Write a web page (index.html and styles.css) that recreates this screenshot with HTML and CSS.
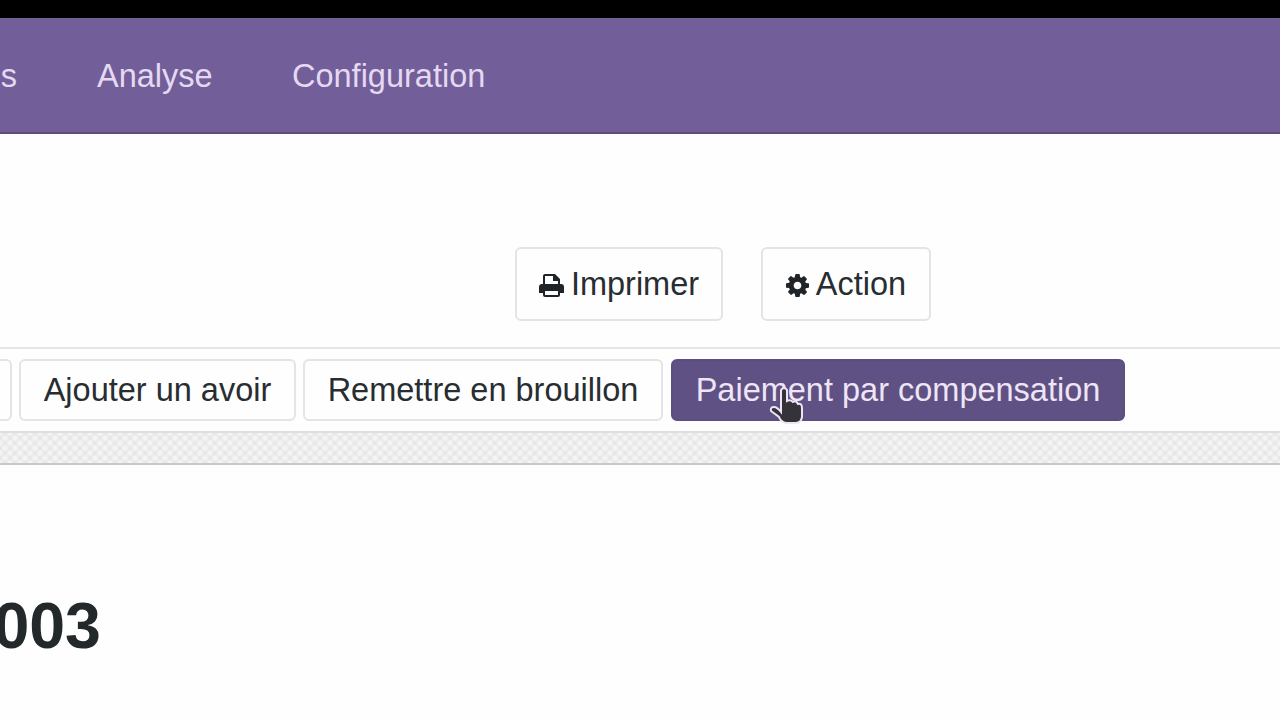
FILE: index.html
```html
<!DOCTYPE html>
<html lang="fr">
<head>
    <meta charset="utf-8">
    <title>Factures</title>
    <link rel="stylesheet" href="styles.css">
</head>

<body>

    <nav class="navbar">
        <a class="cut"><span>es</span></a>
        <a class="analyse"><span>Analyse</span></a>
        <a class="config"><span>Configuration</span></a>
    </nav>

    <div class="control-panel">
        <button class="btn print">
            <svg class="icon" viewBox="0 0 25 23" width="25" height="23">
                <path fill="currentColor" fill-rule="evenodd" d="M4 10V2Q4 0 6 0H16L21 5V10H22Q25 10 25 13V19H21V21Q21 23 19 23H6Q4 23 4 21V19H0V13Q0 10 3 10ZM6 2V10H19V7H14V2ZM6 17V21H19V17Z"/>
            </svg>
            <span>Imprimer</span>
        </button>
        <button class="btn action">
            <svg class="icon" viewBox="0 0 1536 1536" width="23" height="23">
                <path fill="currentColor" fill-rule="evenodd" d="M1024 768q0-106-75-181t-181-75-181 75-75 181 75 181 181 75 181-75 75-181zm512-109v222q0 12-8 23t-20 13l-185 28q-19 54-39 91 35 50 107 138 10 12 10 25t-9 23q-27 37-99 108t-94 71q-12 0-26-9l-138-108q-44 23-91 38-16 136-29 186-7 28-36 28H657q-14 0-24.500-8.500T621 1506l-28-184q-49-16-90-37l-141 107q-10 9-25 9-14 0-25-11-126-114-165-168-7-10-7-23 0-12 8-23 15-21 51-66.500t54-70.500q-27-50-41-99L29 913q-13-2-21-12.500T0 877V655q0-12 8-23t19-13l186-28q14-46 39-92-40-57-107-138-10-12-10-24 0-10 9-23 26-36 98.500-107.500T337 135q13 0 26 10l138 107q44-23 91-38 16-136 29-186 7-28 36-28h222q14 0 24.500 8.500T915 30l28 184q49 16 90 37l142-107q9-9 24-9 13 0 25 10 129 119 165 170 7 8 7 22 0 12-8 23-15 21-51 66.500t-54 70.500q26 50 41 98l183 28q13 2 21 12.500t8 23.500z"/>
            </svg>
            <span>Action</span>
        </button>
    </div>

    <div class="statusbar">
        <button class="btn edge"></button>
        <button class="btn avoir">Ajouter un avoir</button>
        <button class="btn draft">Remettre en brouillon</button>
        <button class="btn primary">
            Paiement par compensation
            <svg class="pointer" viewBox="0 0 36 40" width="36" height="40">
                <path d="M12 4Q15 0 18 4V15Q21 13 24 16Q27 14 29 18Q33 17 33 22V31Q32 37 27 37H17Q12 36 10 31L2 25Q1 21 5 21Q8 21 12 26Z"/>
            </svg>
        </button>
    </div>

    <div class="backdrop"></div>

    <main class="sheet">
        <h1><span>003</span></h1>
    </main>

</body>

</html>
```
FILE: styles.css
```css
* {
    box-sizing: border-box;
}
body {
    margin: 0;
    width: 1280px;
    height: 720px;
    overflow: hidden;
    background-color: #fefefe;
    color: #282d31;
    font-family: "Liberation Sans", Arial, sans-serif;
    font-size: 32.5px;
}
.navbar {
    height: 134px;
    padding-top: 2px;
    border-top: 18px solid #000;
    border-bottom: 2px solid #5d4d7e;
    background-color: #725e99;
    color: #e4d9f1;
    display: flex;
    align-items: center;
}
.navbar a {
    white-space: nowrap;
}
.cut {
    width: 17px;
    display: flex;
    justify-content: flex-end;
}
.analyse {
    margin-left: 80px;
    width: 115px;
}
.config {
    margin-left: 80px;
}
.control-panel {
    height: 215px;
    padding: 113px 0 0 515px;
    border-bottom: 2px solid #e5e5e6;
    display: flex;
    gap: 39px;
}
.btn {
    display: flex;
    align-items: center;
    justify-content: center;
    flex: none;
    height: 62px;
    padding: 0;
    border: 2px solid #e4e4e5;
    border-radius: 6px;
    background-color: #fefefe;
    color: inherit;
    font: inherit;
    white-space: nowrap;
}
.control-panel .btn {
    height: 74px;
}
.icon {
    margin-top: 3px;
    color: #1e2428;
}
.print {
    width: 208px;
    gap: 7px;
}
.action {
    width: 170px;
    margin-left: -1px;
    gap: 7px;
}
.statusbar {
    height: 84px;
    padding-top: 10px;
    border-bottom: 2px solid #dedede;
    display: flex;
}
.edge {
    width: 30px;
    margin-left: -18px;
}
.avoir {
    width: 277px;
    margin-left: 7px;
}
.draft {
    width: 360px;
    margin-left: 7px;
}
.primary {
    position: relative;
    width: 454px;
    margin-left: 8px;
    border-color: #5c4e80;
    background-color: #5f5184;
    color: #eee5f6;
}
.pointer {
    position: absolute;
    left: 96px;
    top: 25px;
    fill: #35333a;
    stroke: #eee4f4;
    stroke-width: 2;
}
.backdrop {
    height: 32px;
    border-bottom: 2px solid #c9c9ca;
    background:
        radial-gradient(circle, #f5f5f5 20%, transparent 60%) 0 0 / 10px 10px,
        radial-gradient(circle, #f5f5f5 20%, transparent 60%) 5px 5px / 10px 10px,
        #e5e5e5;
}
.sheet {
    padding-top: 124px;
}
h1 {
    margin: 0;
    width: 101px;
    display: flex;
    justify-content: flex-end;
    color: #23282b;
    font-size: 64.5px;
    line-height: 74px;
}
```
